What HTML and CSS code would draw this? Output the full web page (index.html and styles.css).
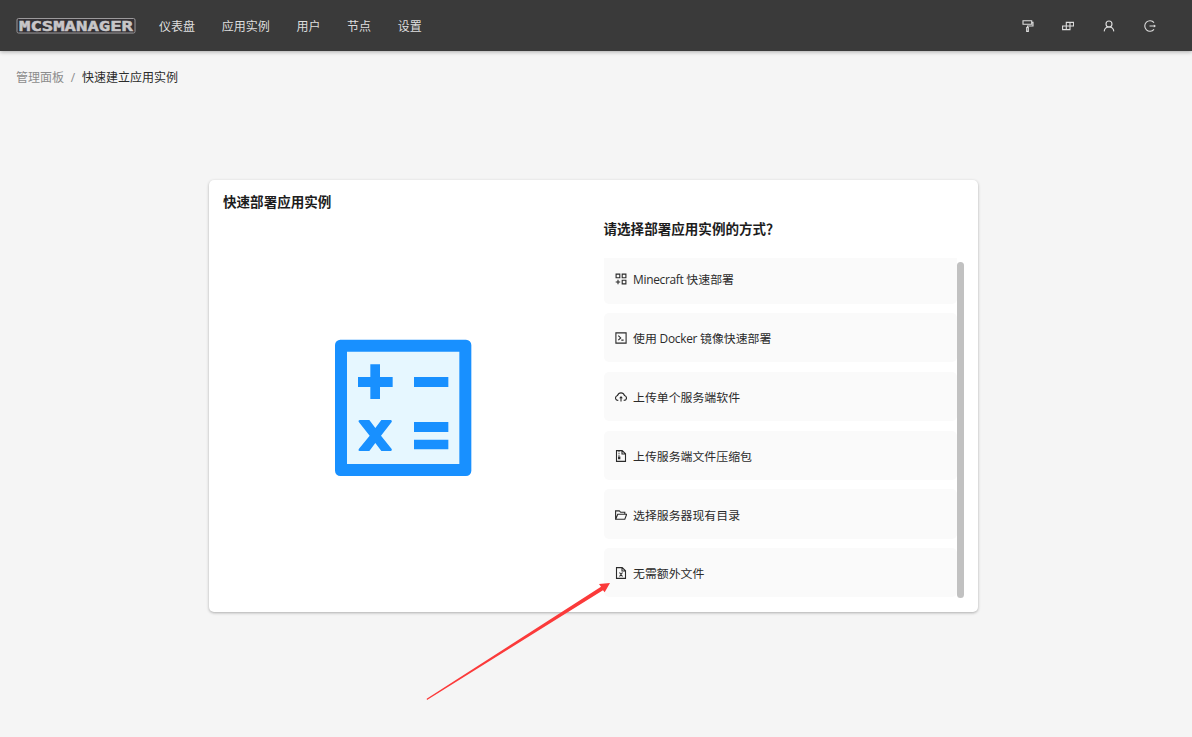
FILE: index.html
```html
<!DOCTYPE html>
<html lang="zh-CN">
<head>
<meta charset="utf-8">
<title>MCSManager</title>
<link rel="stylesheet" href="styles.css">
</head>
<body>
<header class="topbar">
  <svg class="logo" viewBox="0 0 120 18" aria-label="MCSManager"><rect class="logo-plate" x="1" y="1.5" width="118" height="14.5" rx="1.5"/><text class="logo-text" x="3" y="14" textLength="114" lengthAdjust="spacingAndGlyphs">MCSMANAGER</text></svg>
  <nav class="nav"><a>仪表盘</a><a>应用实例</a><a>用户</a><a>节点</a><a>设置</a></nav>
  <div class="tools">
    <svg class="icon" viewBox="0 0 12 12"><path d="M1 .7H9.7V4.2H1ZM9.7 2.2H11V6H5.5V7.5M4.7 7.5H6.3V11.4H4.7Z"/></svg>
    <svg class="icon" viewBox="0 0 12 12"><path d="M4.3 2.4H11.6V6H8V9.6H.6V6H4.3ZM8 2.4V6H4.3V9.6"/></svg>
    <svg class="icon" viewBox="0 0 12 12"><circle cx="6" cy="4" r="3"/><path d="M1.2 11.4C1.4 8.8 3.2 7 6 7S10.6 8.8 10.8 11.4"/></svg>
    <svg class="icon" viewBox="0 0 12 12"><path d="M10 2.7A5.2 5.2 0 1 0 10 9.3M5.5 6H10.5"/><path class="solid" d="M9.8 4.4L12 6L9.8 7.6Z"/></svg>
  </div>
</header>
<main class="page">
  <div class="breadcrumb"><span class="parent">管理面板</span><span class="slash">/</span><span>快速建立应用实例</span></div>
  <section class="card">
    <h2 class="card-title">快速部署应用实例</h2>
    <div class="columns">
      <div class="art">
        <svg class="calculator" viewBox="0 0 510 480"><rect class="blue" x="45" y="29" width="409" height="409" rx="16"/><path class="pale" d="M81 65H418V402H81Z"/><path class="blue" d="M151 103H180V141H218V171H180V207H151V171H114V141H151ZM282 141H385V171H282ZM282 276H385V306H282ZM282 329H385V358H282ZM120 270H148L166 294L184 270H212Q218 271 215 276L183 317L215 357Q218 362 212 363H184L166 339L148 363H119Q113 362 117 356L149 317L117 277Q113 271 120 270Z"/></svg>
      </div>
      <div class="options">
        <h3 class="question">请选择部署应用实例的方式？</h3>
        <div class="scroll">
          <div class="list">
            <div class="item"><svg class="icon" viewBox="0 0 12 12"><path d="M1.1 1.1H4.8V4.8H1.1ZM7.2 1.1H10.9V4.8H7.2ZM7.2 7.2H10.9V10.9H7.2ZM3 6.7V11.2M.7 9H5.2"/></svg><span><span class="latin">Minecraft </span>快速部署</span></div>
            <div class="item"><svg class="icon" viewBox="0 0 12 12"><path d="M.9 .9H11.1V11.1H.9ZM3.3 3.7L5.7 5.9L3.3 8.1M6.3 8.1H8.6"/></svg><span>使用<span class="latin"> Docker </span>镜像快速部署</span></div>
            <div class="item"><svg class="icon" viewBox="0 0 12 12"><path d="M3.3 9.4C1.6 9.4.5 8.4.5 7C.5 5.7 1.3 4.9 2.5 4.5C3.1 2.8 4.3 1.9 6 1.9S8.9 2.8 9.5 4.5C10.7 4.9 11.5 5.7 11.5 7C11.5 8.4 10.4 9.4 8.7 9.4M6 6V10.5"/><path class="solid" d="M6 4.9L7.8 7.2H4.2Z"/></svg><span>上传单个服务端软件</span></div>
            <div class="item"><svg class="icon" viewBox="0 0 12 12"><path d="M1.5 .6H7.2L10.5 3.8V11.4H1.5ZM7 .6V4H10.5"/><path class="fine" d="M4 1.2V6.8"/><path d="M3.6 7H4.8V8.6H3.6Z"/></svg><span>上传服务端文件压缩包</span></div>
            <div class="item"><svg class="icon" viewBox="0 0 12 12"><path d="M.6 10.2V1.9H4.3L5.7 3.3H9.8V5.2M.7 10.2L2.7 5.2H11.7L9.8 10.2Z"/></svg><span>选择服务器现有目录</span></div>
            <div class="item"><svg class="icon" viewBox="0 0 12 12"><path d="M1.5 .6H7.2L10.5 3.8V11.4H1.5ZM7 .6V4H10.5M4.5 5.5L7.5 9.5M7.5 5.5L4.5 9.5"/></svg><span>无需额外文件</span></div>
          </div>
          <div class="scrollbar"></div>
        </div>
      </div>
    </div>
  </section>
</main>
<svg class="arrow" viewBox="0 0 660 420"><path d="M50 386L573 50L567 42L600 39L584 67L579 61L51 390Z"/></svg>
</body>
</html>
```
FILE: styles.css
```css
* { box-sizing: border-box; }
body {
  margin: 0;
  height: 737px;
  overflow: hidden;
  background: #f5f5f5;
  color: #2b2b2b;
  font: 11.9px/18px "Open Sans", "Noto Sans CJK SC", sans-serif;
}
svg { display: block; flex: none; }
.topbar {
  height: 51px;
  padding: 0 36px 2px 16px;
  display: flex;
  align-items: center;
  background: #3a3a3a;
  color: #dedede;
  box-shadow: 0 1px 4px rgba(0, 0, 0, .3);
}
.topbar .icon { color: #dedede; }
.logo { width: 120px; height: 18px; margin-top: 3px; }
.logo-plate { fill: #343135; stroke: #9b999b; stroke-width: 1; }
.logo-text {
  font: bold 14.5px "DejaVu Sans Mono", monospace;
  fill: #c8c6c8;
  stroke: #c8c6c8;
  stroke-width: .5;
  stroke-linejoin: miter;
}
.nav { display: flex; gap: 26.7px; margin: 4px 0 0 23px; font-size: 12px; }
.tools { display: flex; gap: 28.8px; margin: 3px 0 0 auto; }
.icon {
  width: 12px;
  height: 12px;
  fill: none;
  stroke: currentColor;
  stroke-width: 1.1;
}
.icon .solid { fill: currentColor; stroke: none; }
.icon .fine { stroke-dasharray: 1 1; }
.page { padding: 18px 16px 0; }
.breadcrumb { display: flex; height: 18px; font-size: 12px; }
.breadcrumb .parent { color: #8c8c8c; }
.breadcrumb .slash { color: #8c8c8c; width: 18px; text-align: center; }
.card {
  width: 769px;
  height: 432px;
  margin: 93px 0 0 193px;
  padding: 12px 14px 14px;
  background: #fff;
  border-radius: 5px;
  box-shadow: 0 1px 3px rgba(0, 0, 0, .3);
}
.card-title, .question {
  margin: 0;
  height: 20px;
  font-size: 13.55px;
  line-height: 20px;
  font-weight: 700;
  color: #1d1d1d;
  white-space: nowrap;
}
.columns { display: flex; height: 386px; }
.art { width: 380.5px; padding: 118px 0 0 97px; }
.calculator { width: 170px; height: 160px; }
.blue { fill: #1890ff; }
.pale { fill: #e6f7ff; }
.options { width: 360.5px; padding-top: 7px; }
.scroll { display: flex; height: 340px; margin-top: 19px; overflow: hidden; }
.list {
  width: 353.5px;
  margin-top: -3.7px;
  display: flex;
  flex-direction: column;
  gap: 9.6px;
}
.item {
  height: 49.2px;
  flex: none;
  display: flex;
  align-items: center;
  gap: 6.5px;
  padding: 1px 11px 0;
  background: #fafafa;
  border-radius: 5px;
}
.latin { letter-spacing: -.28px; white-space: pre; }
.scrollbar { width: 7px; height: 336px; margin-top: 4px; background: #c1c1c1; border-radius: 4px; }
.arrow { position: absolute; left: 410px; top: 570px; width: 220px; height: 140px; fill: #fb3a3a; }
```
